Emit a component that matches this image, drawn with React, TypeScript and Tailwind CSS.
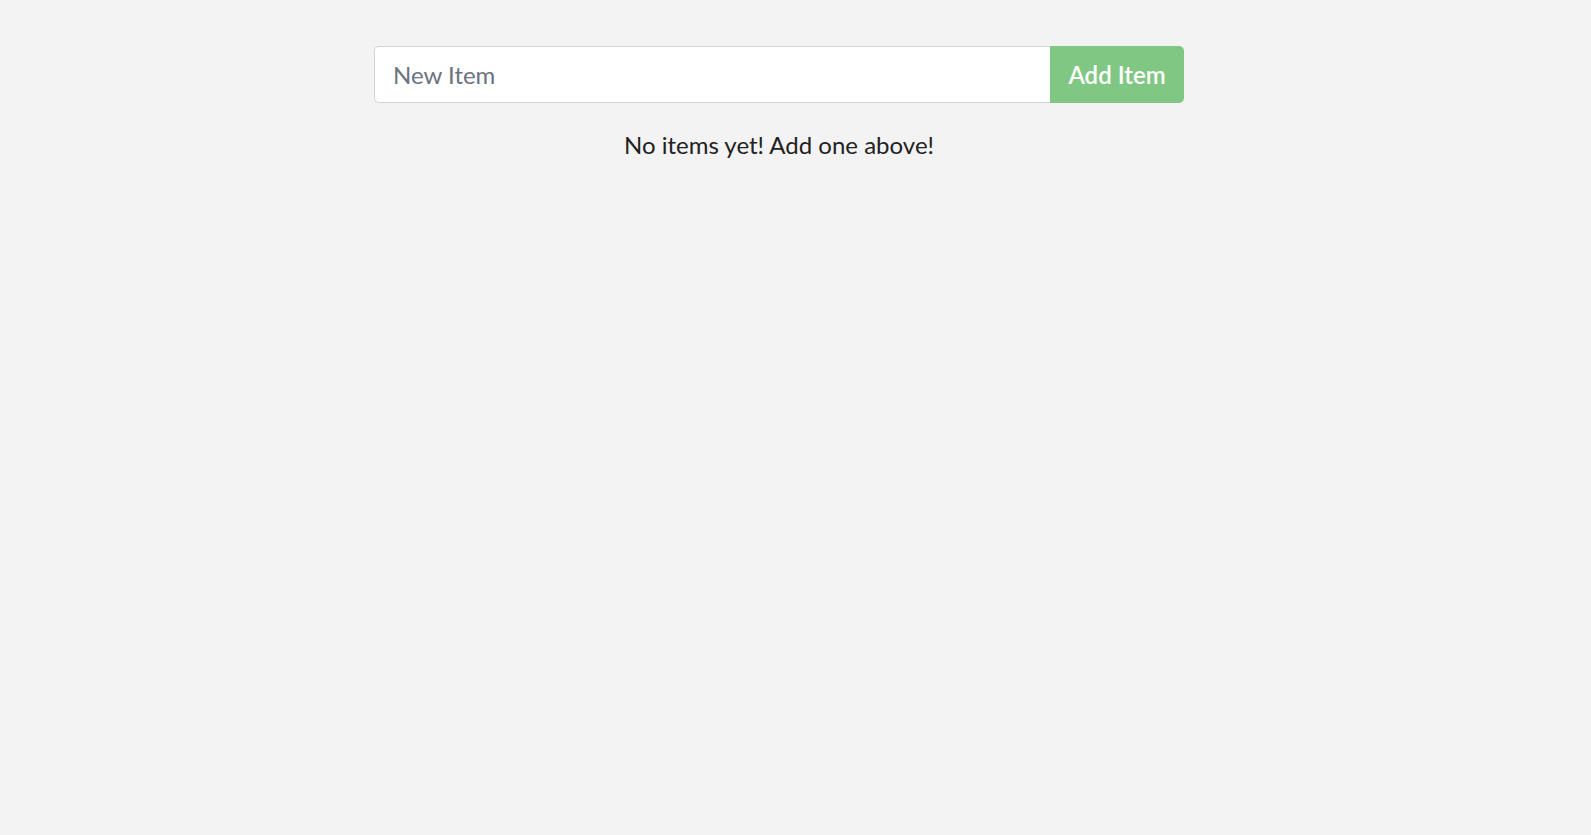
import React from "react";

export default function App() {
  return (
    <div className="min-h-[835px] w-full bg-[#f3f3f3] font-['Lato',sans-serif] text-[#222]">
      <div className="flex flex-col items-center pr-[33px] pt-[46px]">
        <form className="flex w-[810px]" onSubmit={(e) => e.preventDefault()}>
          <input
            type="text"
            placeholder="New Item"
            className="h-[57px] flex-1 rounded-l-[5px] border border-r-0 border-[#d1d5db] bg-white px-[18px] text-[24px] text-[#222] outline-none placeholder:text-[#6b7280]"
          />
          <button
            type="submit"
            className="h-[57px] w-[134px] rounded-r-[5px] bg-[#81c784] text-[24px] font-semibold text-white"
          >
            Add Item
          </button>
        </form>
        <p className="mt-[27px] text-[24px] leading-[30px]">No items yet! Add one above!</p>
      </div>
    </div>
  );
}
